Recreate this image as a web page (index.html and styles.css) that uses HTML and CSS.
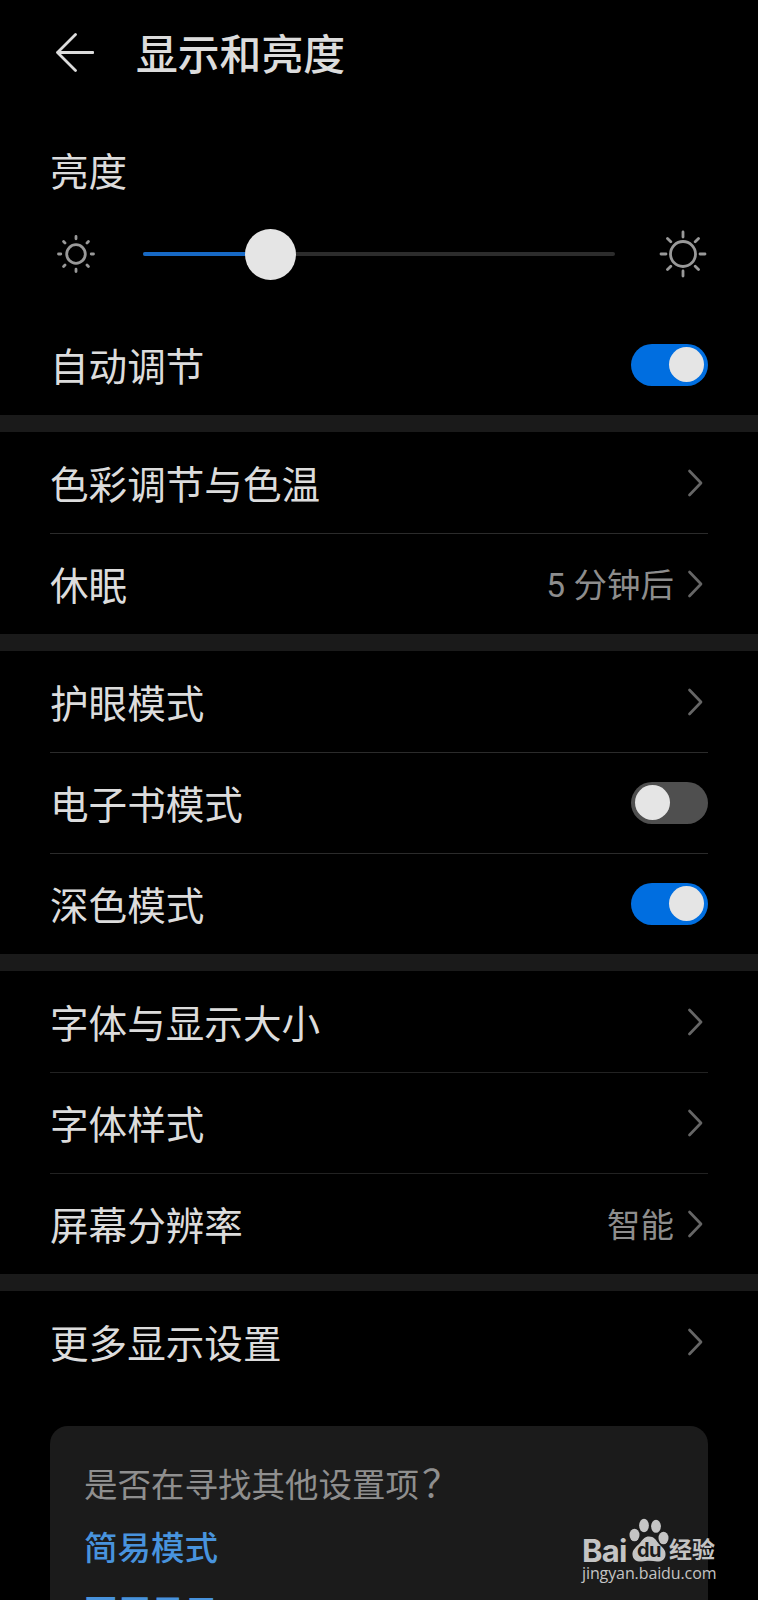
FILE: index.html
```
<!DOCTYPE html>
<html lang="zh-CN">
<head>
<meta charset="utf-8">
<title>显示和亮度</title>
<link rel="stylesheet" href="styles.css">
</head>
<body>
<svg class="defs" width="0" height="0">
  <symbol id="chevron" viewBox="0 0 16 28"><path d="M2.500 2 14 14 2.500 26"/></symbol>
</svg>
<main class="screen">
  <header class="header">
    <svg class="back" width="40" height="40" viewBox="0 0 40 40"><path d="M21.500 1.500 3.500 19.500 21.500 37.500M3.500 19.500H39"/></svg>
    <h1 class="title">显示和亮度</h1>
  </header>

  <section class="brightness">
    <h2 class="label caption">亮度</h2>
    <div class="slider-row">
      <svg class="sun" width="40" height="40" viewBox="-20 -20 40 40"><circle r="9.300"/><path d="M0-15.200V-17.500M0 15.200V17.500M-15.200 0H-17.500M15.200 0H17.500M-11-11-12.400-12.400M11-11 12.400-12.400M-11 11-12.400 12.400M11 11 12.400 12.400"/></svg>
      <div class="track"><div class="fill"></div><div class="knob"></div></div>
      <svg class="sun" width="50" height="50" viewBox="-25 -25 50 50"><circle r="12.500"/><path d="M0-17V-22M0 17V22M-17 0H-22M17 0H22M-12.200-12.200-15.500-15.500M12.200-12.200 15.500-15.500M-12.200 12.200-15.500 15.500M12.200 12.200 15.500 15.500"/></svg>
    </div>
    <div class="row"><span class="label">自动调节</span><span class="switch on"></span></div>
  </section>

  <section class="group">
    <div class="row"><span class="label">色彩调节与色温</span><svg class="chevron"><use href="#chevron"/></svg></div>
    <div class="row"><span class="label">休眠</span><span class="value">5 分钟后</span><svg class="chevron"><use href="#chevron"/></svg></div>
  </section>

  <section class="group">
    <div class="row"><span class="label">护眼模式</span><svg class="chevron"><use href="#chevron"/></svg></div>
    <div class="row"><span class="label">电子书模式</span><span class="switch"></span></div>
    <div class="row"><span class="label">深色模式</span><span class="switch on"></span></div>
  </section>

  <section class="group">
    <div class="row"><span class="label">字体与显示大小</span><svg class="chevron"><use href="#chevron"/></svg></div>
    <div class="row faint"><span class="label">字体样式</span><svg class="chevron"><use href="#chevron"/></svg></div>
    <div class="row faint"><span class="label">屏幕分辨率</span><span class="value">智能</span><svg class="chevron"><use href="#chevron"/></svg></div>
  </section>

  <section class="group">
    <div class="row"><span class="label">更多显示设置</span><svg class="chevron"><use href="#chevron"/></svg></div>
  </section>

  <aside class="card">
    <p class="question">是否在寻找其他设置项<span class="mark">？</span></p>
    <a class="link">简易模式</a>
    <a class="link">灭屏显示</a>
  </aside>

  <div class="watermark">
    <div class="brand">
      <span class="bai">Bai</span>
      <span class="paw">
        <svg width="40" height="44" viewBox="0 0 40 44"><ellipse cx="5.500" cy="17" rx="5" ry="6.300"/><ellipse cx="15" cy="7.500" rx="4.900" ry="6.700"/><ellipse cx="27" cy="8.300" rx="4.900" ry="6.500"/><ellipse cx="34.500" cy="20" rx="5" ry="6.300"/><path d="M20 18.500C25 18.500 27 22 30 26C34 30 37 32 36.500 37C36 42 32 43.700 28 43.500C23 42.500 17 42.500 13 43.500C8 44 4 42 3.500 37C3 32 7 29 11 25C14 21 16 18.500 20 18.500Z"/></svg>
        <span class="du">du</span>
      </span>
      <span class="jingyan">经验</span>
    </div>
    <div class="site">jingyan.baidu.com</div>
  </div>
</main>
</body>
</html>
```
FILE: styles.css
```
* { box-sizing: border-box; }
body {
  margin: 0;
  background: #000;
  color: #dcdcdc;
  font-family: "Roboto", "Noto Sans CJK SC", sans-serif;
}
h1, h2, p { margin: 0; font-weight: 400; }
.defs { position: absolute; }
.screen {
  position: relative;
  height: 1600px;
  overflow: hidden;
}
.header {
  display: flex;
  align-items: center;
  height: 105px;
  padding-left: 54px;
}
.back { margin-right: 42px; fill: none; stroke: #dcdcdc; stroke-width: 2.8; stroke-linecap: round; stroke-linejoin: round; }
.title { font-size: 41.800px; font-weight: 500; line-height: 60px; padding-top: 6px; }
.label { padding-top: 7px; font-size: 38.600px; line-height: 56px; white-space: nowrap; }
.brightness { height: 310px; padding: 0 50px; }
.caption { height: 109px; padding-top: 40px; }
.slider-row {
  display: flex;
  align-items: center;
  height: 80px;
  padding-left: 5.500px;
}
.sun { flex: none; fill: none; stroke: #999; stroke-width: 2.8; stroke-linecap: round; }
.track {
  position: relative;
  width: 472px;
  height: 4px;
  margin: 0 42.500px 0 47.500px;
  border-radius: 2px;
  background: #2c2c2c;
}
.fill { width: 127px; height: 4px; border-radius: 2px; background: #1769c5; }
.knob {
  position: absolute;
  left: 102px;
  top: -23px;
  width: 51px;
  height: 51px;
  border-radius: 50%;
  background: #e5e5e5;
}
.row {
  display: flex;
  align-items: center;
  height: 101px;
}
.brightness .row { margin-top: 20px; }
.group { border-top: 17px solid #1a1a1a; padding: 0 50px; }
.row + .row { border-top: 1px solid #2b2b2b; }
.row + .faint { border-top-color: #222; }
.row .label { flex: 1; }
.row + .row .label { padding-top: 5px; }
.value { padding-top: 3px; font-size: 33.500px; color: #8d8d8d; line-height: 48px; }
.chevron {
  width: 16px;
  height: 28px;
  margin: 0 5px 0 13px;
  fill: none;
  stroke: #666;
  stroke-width: 2.7;
  stroke-linecap: round;
  stroke-linejoin: round;
}
.switch {
  width: 77px;
  height: 42px;
  padding: 3px 4px;
  border-radius: 21px;
  background: #4f4f4f;
}
.switch::before {
  content: "";
  display: block;
  width: 35px;
  height: 35px;
  border-radius: 50%;
  background: #e5e5e5;
}
.switch.on { background: #006ee0; }
.switch.on::before { margin-left: auto; }
.card {
  height: 300px;
  margin: 34px 50px 0;
  padding: 34px 34px 0;
  border-radius: 18px;
  background: #1b1b1b;
  font-size: 33.500px;
}
.question { line-height: 52px; color: #8f8f8f; }
.mark { margin-left: 3px; font-size: 38px; line-height: 1; }
.link { display: block; height: 64px; padding-top: 11px; line-height: 52px; color: #4893dd; font-weight: 500; }
.watermark {
  position: absolute;
  left: 582px;
  top: 1518px;
  color: #c4c4c4;
}
.brand { display: flex; height: 44px; align-items: flex-end; }
.bai { width: 47px; font: 700 31px/23px "Inter", sans-serif; letter-spacing: -0.700px; }
.paw { position: relative; width: 40px; height: 44px; fill: #c4c4c4; }
.du { position: absolute; left: 8px; top: 22px; font: 700 20px/20px "Inter", sans-serif; letter-spacing: -0.500px; color: #1b1b1b; }
.jingyan { font-size: 23px; line-height: 22px; font-weight: 700; }
.site { font: 500 16px/22px "Open Sans", sans-serif; letter-spacing: -0.100px; }
```
